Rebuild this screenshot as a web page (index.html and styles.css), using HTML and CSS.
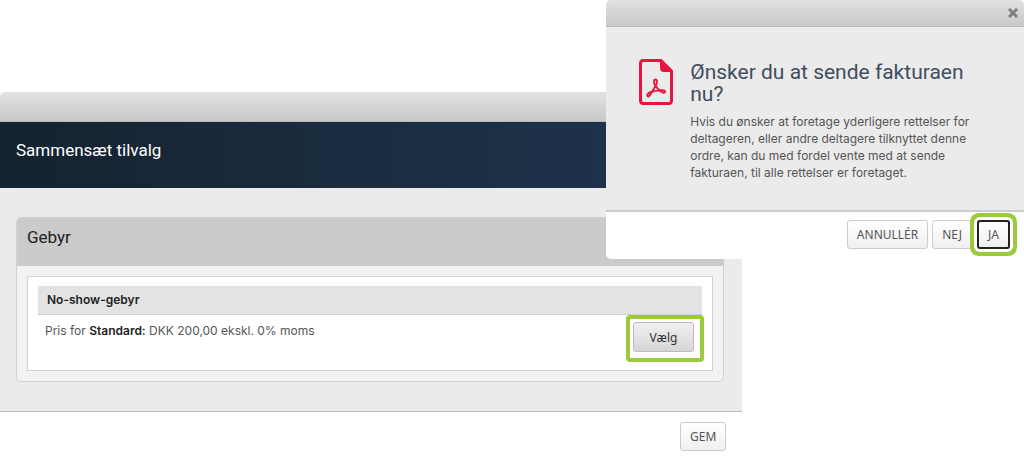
FILE: index.html
```html
<!DOCTYPE html>
<html lang="da">
<head>
    <meta charset="UTF-8">
    <meta name="viewport" content="width=device-width, initial-scale=1.0">
    <title>Sammensæt tilvalg</title>
    <link rel="stylesheet" href="styles.css">
</head>
<body>
    <main class="window">
        <div class="window-bar"></div>
        <header class="window-header">
            <h1>Sammensæt tilvalg</h1>
        </header>
        <div class="window-body">
            <section class="panel">
                <h2>Gebyr</h2>
                <div class="panel-body">
                    <div class="option">
                        <h3>No-show-gebyr</h3>
                        <div class="option-row">
                            <p>Pris for <strong>Standard:</strong> DKK 200,00 ekskl. 0% moms</p>
                            <div class="marked">
                                <button type="button" class="btn btn-choose">Vælg</button>
                            </div>
                        </div>
                    </div>
                </div>
            </section>
        </div>
        <footer class="window-footer">
            <button type="button" class="btn">GEM</button>
        </footer>
    </main>

    <div class="dialog" role="dialog" aria-labelledby="dialogTitle">
        <div class="dialog-bar">
            <button type="button" class="close" aria-label="Luk">
                <svg width="10" height="10" viewBox="0 0 10 10">
                    <path d="M2 2L8 8M8 2L2 8" stroke="#808080" stroke-width="3" stroke-linecap="square"/>
                </svg>
            </button>
        </div>
        <div class="dialog-body">
            <svg class="pdf-icon" width="34" height="46" viewBox="0 0 34 46" fill="none" stroke="#e8153f">
                <path d="M4 1.5H22L32.5 12V41.5Q32.5 44.5 29.5 44.5H4.5Q1.5 44.5 1.5 41.5V4.5Q1.5 1.5 4 1.5Z" stroke-width="3" stroke-linejoin="round"/>
                <path d="M22 1.5V9Q22 12 25 12H32.5Z" fill="#e8153f" stroke-width="2" stroke-linejoin="round"/>
                <g stroke-width="1.9" stroke-linejoin="round">
                    <path d="M16.500 27C14.500 24 14.500 20.500 16.500 20.500S18.500 24 16.500 27Z"/>
                    <path d="M12.500 33C9 33.500 7.500 36 8.500 37.200S11.500 36 12.500 33Z"/>
                    <path d="M21 31.500C24 30.500 26.500 31.500 26 33S23 33.500 21 31.500Z"/>
                    <path d="M16.500 26.500Q15 30.500 12.300 33.200Q16.500 31.300 21.200 31.700Q18 29.500 16.500 26.500Z"/>
                </g>
            </svg>
            <div class="dialog-text">
                <h2 id="dialogTitle">Ønsker du at sende fakturaen nu?</h2>
                <p>Hvis du ønsker at foretage yderligere rettelser for deltageren, eller andre deltagere tilknyttet denne ordre, kan du med fordel vente med at sende fakturaen, til alle rettelser er foretaget.</p>
            </div>
        </div>
        <div class="dialog-footer">
            <button type="button" class="btn">ANNULLÉR</button>
            <button type="button" class="btn">NEJ</button>
            <button type="button" class="btn btn-yes">JA</button>
        </div>
    </div>
</body>
</html>
```

FILE: styles.css
```css
* {
    box-sizing: border-box;
}

body {
    margin: 0;
    background: #fff;
    color: #555;
    font-family: Inter, "Open Sans", sans-serif;
    font-size: 12px;
    line-height: 17px;
}

h1, h2, h3, p {
    margin: 0;
}

h1, h2 {
    font-family: Roboto, sans-serif;
    font-weight: 400;
}

.window {
    width: 72.5%;
    margin-top: 92px;
}

.window-bar,
.dialog-bar {
    background: linear-gradient(#e2e2e2, #c8c8c8);
    border-bottom: 1px solid #bbb;
    border-radius: 5px 5px 0 0;
}

.window-bar {
    height: 30px;
    border-radius: 5px 0 0 0;
}

.window-header {
    padding: 16px 16px 26px;
    background: linear-gradient(90deg, #152330, #1f3650);
    color: #fff;
}

.window-header h1 {
    font-size: 17px;
    line-height: 24px;
}

.window-body {
    padding: 29px 18px 29px 16px;
    background: #ebebeb;
    border-bottom: 1px solid #bbb;
}

.panel {
    border: 1px solid #d0d0d0;
    border-radius: 5px;
    background: #f2f2f2;
    overflow: hidden;
}

.panel h2 {
    padding: 7px 10px 17px;
    background: #cbcbcb;
    color: #222;
    font-size: 17px;
    line-height: 24px;
}

.panel-body {
    padding: 10px;
}

.option {
    padding: 9px 10px 8px;
    background: #fff;
    border: 1px solid #d0d0d0;
}

.option h3 {
    padding: 5px 9px 6px;
    background: #e3e3e3;
    border-bottom: 1px solid #d0d0d0;
    color: #222;
    font-size: 12px;
    font-weight: 600;
    line-height: 17px;
}

.option-row {
    display: flex;
    justify-content: space-between;
    align-items: flex-start;
}

.option-row p {
    padding: 7px;
}

.option-row strong {
    color: #222;
    font-weight: 600;
}

/* green frame round the button to click */
.marked {
    margin-right: -2px;
    padding: 3px 6px 6px 3px;
    border: 4px solid #9bcb3c;
    border-radius: 4px;
    background: #fff;
}

.btn {
    display: block;
    height: 29px;
    padding: 0 9px;
    border: 1px solid #ccc;
    border-radius: 3px;
    background: linear-gradient(#fff, #f0f0f0);
    color: #555;
    font-family: "Noto Sans", sans-serif;
    font-size: 12px;
}

.btn-choose {
    height: 30px;
    padding: 0 16px;
    background: linear-gradient(#f0f0f0, #d6d6d6);
    border-color: #bbb;
    color: #333;
}

.window-footer {
    display: flex;
    justify-content: flex-end;
    padding: 10px 16px;
}

.dialog {
    position: absolute;
    top: 0;
    right: 0;
    width: 40.8%;
    background: #fff;
    border-radius: 5px;
}

.dialog-bar {
    display: flex;
    justify-content: flex-end;
    height: 27px;
    padding: 7px 6px;
}

.close {
    display: block;
    padding: 0;
    border: 0;
    background: none;
    line-height: 0;
}

.dialog-body {
    display: flex;
    gap: 17px;
    padding: 32px 38px 29px 33px;
    background: #ebebeb;
    border-bottom: 2px solid #ccc;
}

.pdf-icon {
    flex: none;
}

.dialog-text {
    padding-top: 2px;
}

.dialog-text h2 {
    margin-bottom: 8px;
    color: #3f4e5f;
    font-size: 21px;
    line-height: 22px;
}

.dialog-footer {
    display: flex;
    justify-content: flex-end;
    gap: 4px;
    padding: 8px 14px 10px;
}

.btn-yes {
    margin-left: 1px;
    border: 2px solid #222;
    box-shadow: 0 0 0 3px #fff, 0 0 0 7px #9bcb3c;
}
```
